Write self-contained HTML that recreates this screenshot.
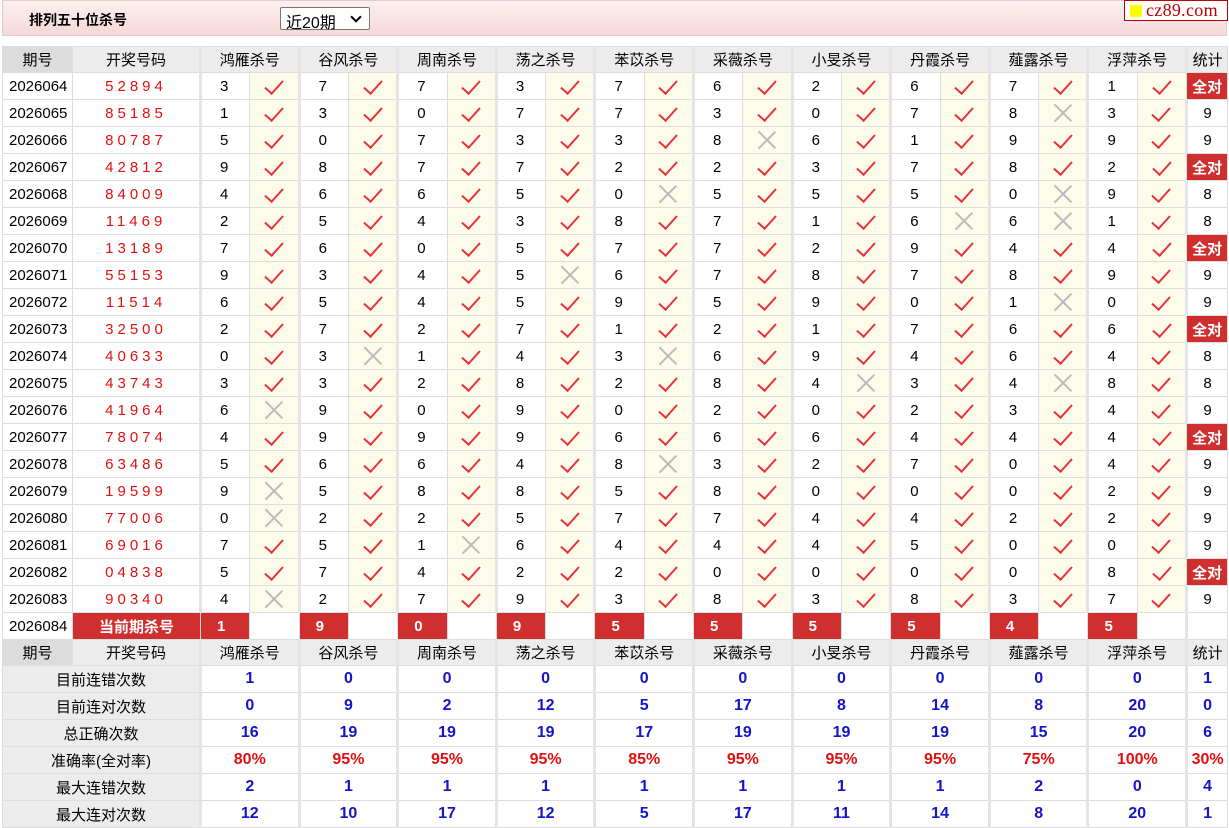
<!DOCTYPE html>
<html><head><meta charset="utf-8">
<style>
*{margin:0;padding:0;box-sizing:border-box}
body{width:1229px;height:827px;background:#fff;font-family:"Liberation Sans","Noto Sans CJK SC",sans-serif;font-size:15px;color:#000;position:relative;overflow:hidden}
.top{position:absolute;left:2px;top:0;width:1225px;height:36px;background:linear-gradient(#fdf0f0,#f6d8d8);border:1px solid #e6caca}
.top b{position:absolute;left:26px;top:9px;font-size:14px}
.sel{position:absolute;left:277px;top:6px;width:90px;height:23px;border:1px solid #777;background:#fff;font-size:16px;padding:1px 5px;border-radius:2px}
.sel::after{content:'';position:absolute;right:9px;top:5px;width:6px;height:6px;border:solid #000;border-width:0 2px 2px 0;transform:rotate(45deg)}
.logo{position:absolute;left:1124px;top:0;width:104px;height:21px;border:1px solid #b00;background:#fff;font-family:"Liberation Serif",serif;font-size:18px;color:#b00;line-height:18px;padding-left:21px;letter-spacing:0.3px}
.logo::before{content:'';position:absolute;left:5px;top:4px;width:12px;height:12px;background:#ff0}
table{position:absolute;left:2px;top:46px;border-collapse:collapse;table-layout:fixed;width:1225px}
td{border:1px solid #ddd;text-align:center;height:27px;padding:0;white-space:nowrap;overflow:hidden}
tr.h td{background:#ececec;height:26px}
tr.h td.q{background:#dcdcdc}
td.p{text-align:left;padding-left:6px}
td.k{color:#e01010;letter-spacing:4px;font-size:15px}
td.n{text-align:left;padding-left:18px;border-left:3px solid #e4e4e4}
td.g{border-left:3px solid #e4e4e4}
td.c{background:#fdfbea}
td.s{border-left:3px solid #e4e4e4}
.y{display:inline-block;width:10px;height:18px;border:solid #e8303a;border-width:0 2.5px 2.5px 0;transform:rotate(42deg);margin-top:-4px;vertical-align:middle}
.x{display:inline-block;width:18px;height:18px;position:relative;vertical-align:middle}
.x::before,.x::after{content:'';position:absolute;left:8px;top:-3px;width:1.5px;height:24px;background:#bbb;transform:rotate(45deg)}
.x::after{transform:rotate(-45deg)}
td.a{background:#cf2f2f;color:#fff;font-weight:bold}
td.r{background:#cf2f2f;color:#fff;font-weight:bold;text-align:left;padding-left:16px}
td.l{background:#ececec}
td.v{color:#1414c8;font-weight:bold;font-size:16px;border-left:3px solid #e4e4e4}
td.pc{color:#e01010}
</style></head><body>
<div class="top"><b>排列五十位杀号</b><div class="sel">近20期</div></div>
<div class="logo">cz89.com</div>
<table>
<colgroup><col style="width:70px"><col style="width:128px"><col span="20" style="width:49.3px"><col style="width:41px"></colgroup>
<tr class="h"><td class="q">期号</td><td>开奖号码</td><td colspan="2" class="g">鸿雁杀号</td><td colspan="2" class="g">谷风杀号</td><td colspan="2" class="g">周南杀号</td><td colspan="2" class="g">荡之杀号</td><td colspan="2" class="g">苯苡杀号</td><td colspan="2" class="g">采薇杀号</td><td colspan="2" class="g">小旻杀号</td><td colspan="2" class="g">丹霞杀号</td><td colspan="2" class="g">薤露杀号</td><td colspan="2" class="g">浮萍杀号</td><td class="s">统计</td></tr>
<tr><td class="p">2026064</td><td class="k">52894</td><td class="n">3</td><td class="c"><i class="y"></i></td><td class="n">7</td><td class="c"><i class="y"></i></td><td class="n">7</td><td class="c"><i class="y"></i></td><td class="n">3</td><td class="c"><i class="y"></i></td><td class="n">7</td><td class="c"><i class="y"></i></td><td class="n">6</td><td class="c"><i class="y"></i></td><td class="n">2</td><td class="c"><i class="y"></i></td><td class="n">6</td><td class="c"><i class="y"></i></td><td class="n">7</td><td class="c"><i class="y"></i></td><td class="n">1</td><td class="c"><i class="y"></i></td><td class="a">全对</td></tr>
<tr><td class="p">2026065</td><td class="k">85185</td><td class="n">1</td><td class="c"><i class="y"></i></td><td class="n">3</td><td class="c"><i class="y"></i></td><td class="n">0</td><td class="c"><i class="y"></i></td><td class="n">7</td><td class="c"><i class="y"></i></td><td class="n">7</td><td class="c"><i class="y"></i></td><td class="n">3</td><td class="c"><i class="y"></i></td><td class="n">0</td><td class="c"><i class="y"></i></td><td class="n">7</td><td class="c"><i class="y"></i></td><td class="n">8</td><td class="c"><i class="x"></i></td><td class="n">3</td><td class="c"><i class="y"></i></td><td class="s">9</td></tr>
<tr><td class="p">2026066</td><td class="k">80787</td><td class="n">5</td><td class="c"><i class="y"></i></td><td class="n">0</td><td class="c"><i class="y"></i></td><td class="n">7</td><td class="c"><i class="y"></i></td><td class="n">3</td><td class="c"><i class="y"></i></td><td class="n">3</td><td class="c"><i class="y"></i></td><td class="n">8</td><td class="c"><i class="x"></i></td><td class="n">6</td><td class="c"><i class="y"></i></td><td class="n">1</td><td class="c"><i class="y"></i></td><td class="n">9</td><td class="c"><i class="y"></i></td><td class="n">9</td><td class="c"><i class="y"></i></td><td class="s">9</td></tr>
<tr><td class="p">2026067</td><td class="k">42812</td><td class="n">9</td><td class="c"><i class="y"></i></td><td class="n">8</td><td class="c"><i class="y"></i></td><td class="n">7</td><td class="c"><i class="y"></i></td><td class="n">7</td><td class="c"><i class="y"></i></td><td class="n">2</td><td class="c"><i class="y"></i></td><td class="n">2</td><td class="c"><i class="y"></i></td><td class="n">3</td><td class="c"><i class="y"></i></td><td class="n">7</td><td class="c"><i class="y"></i></td><td class="n">8</td><td class="c"><i class="y"></i></td><td class="n">2</td><td class="c"><i class="y"></i></td><td class="a">全对</td></tr>
<tr><td class="p">2026068</td><td class="k">84009</td><td class="n">4</td><td class="c"><i class="y"></i></td><td class="n">6</td><td class="c"><i class="y"></i></td><td class="n">6</td><td class="c"><i class="y"></i></td><td class="n">5</td><td class="c"><i class="y"></i></td><td class="n">0</td><td class="c"><i class="x"></i></td><td class="n">5</td><td class="c"><i class="y"></i></td><td class="n">5</td><td class="c"><i class="y"></i></td><td class="n">5</td><td class="c"><i class="y"></i></td><td class="n">0</td><td class="c"><i class="x"></i></td><td class="n">9</td><td class="c"><i class="y"></i></td><td class="s">8</td></tr>
<tr><td class="p">2026069</td><td class="k">11469</td><td class="n">2</td><td class="c"><i class="y"></i></td><td class="n">5</td><td class="c"><i class="y"></i></td><td class="n">4</td><td class="c"><i class="y"></i></td><td class="n">3</td><td class="c"><i class="y"></i></td><td class="n">8</td><td class="c"><i class="y"></i></td><td class="n">7</td><td class="c"><i class="y"></i></td><td class="n">1</td><td class="c"><i class="y"></i></td><td class="n">6</td><td class="c"><i class="x"></i></td><td class="n">6</td><td class="c"><i class="x"></i></td><td class="n">1</td><td class="c"><i class="y"></i></td><td class="s">8</td></tr>
<tr><td class="p">2026070</td><td class="k">13189</td><td class="n">7</td><td class="c"><i class="y"></i></td><td class="n">6</td><td class="c"><i class="y"></i></td><td class="n">0</td><td class="c"><i class="y"></i></td><td class="n">5</td><td class="c"><i class="y"></i></td><td class="n">7</td><td class="c"><i class="y"></i></td><td class="n">7</td><td class="c"><i class="y"></i></td><td class="n">2</td><td class="c"><i class="y"></i></td><td class="n">9</td><td class="c"><i class="y"></i></td><td class="n">4</td><td class="c"><i class="y"></i></td><td class="n">4</td><td class="c"><i class="y"></i></td><td class="a">全对</td></tr>
<tr><td class="p">2026071</td><td class="k">55153</td><td class="n">9</td><td class="c"><i class="y"></i></td><td class="n">3</td><td class="c"><i class="y"></i></td><td class="n">4</td><td class="c"><i class="y"></i></td><td class="n">5</td><td class="c"><i class="x"></i></td><td class="n">6</td><td class="c"><i class="y"></i></td><td class="n">7</td><td class="c"><i class="y"></i></td><td class="n">8</td><td class="c"><i class="y"></i></td><td class="n">7</td><td class="c"><i class="y"></i></td><td class="n">8</td><td class="c"><i class="y"></i></td><td class="n">9</td><td class="c"><i class="y"></i></td><td class="s">9</td></tr>
<tr><td class="p">2026072</td><td class="k">11514</td><td class="n">6</td><td class="c"><i class="y"></i></td><td class="n">5</td><td class="c"><i class="y"></i></td><td class="n">4</td><td class="c"><i class="y"></i></td><td class="n">5</td><td class="c"><i class="y"></i></td><td class="n">9</td><td class="c"><i class="y"></i></td><td class="n">5</td><td class="c"><i class="y"></i></td><td class="n">9</td><td class="c"><i class="y"></i></td><td class="n">0</td><td class="c"><i class="y"></i></td><td class="n">1</td><td class="c"><i class="x"></i></td><td class="n">0</td><td class="c"><i class="y"></i></td><td class="s">9</td></tr>
<tr><td class="p">2026073</td><td class="k">32500</td><td class="n">2</td><td class="c"><i class="y"></i></td><td class="n">7</td><td class="c"><i class="y"></i></td><td class="n">2</td><td class="c"><i class="y"></i></td><td class="n">7</td><td class="c"><i class="y"></i></td><td class="n">1</td><td class="c"><i class="y"></i></td><td class="n">2</td><td class="c"><i class="y"></i></td><td class="n">1</td><td class="c"><i class="y"></i></td><td class="n">7</td><td class="c"><i class="y"></i></td><td class="n">6</td><td class="c"><i class="y"></i></td><td class="n">6</td><td class="c"><i class="y"></i></td><td class="a">全对</td></tr>
<tr><td class="p">2026074</td><td class="k">40633</td><td class="n">0</td><td class="c"><i class="y"></i></td><td class="n">3</td><td class="c"><i class="x"></i></td><td class="n">1</td><td class="c"><i class="y"></i></td><td class="n">4</td><td class="c"><i class="y"></i></td><td class="n">3</td><td class="c"><i class="x"></i></td><td class="n">6</td><td class="c"><i class="y"></i></td><td class="n">9</td><td class="c"><i class="y"></i></td><td class="n">4</td><td class="c"><i class="y"></i></td><td class="n">6</td><td class="c"><i class="y"></i></td><td class="n">4</td><td class="c"><i class="y"></i></td><td class="s">8</td></tr>
<tr><td class="p">2026075</td><td class="k">43743</td><td class="n">3</td><td class="c"><i class="y"></i></td><td class="n">3</td><td class="c"><i class="y"></i></td><td class="n">2</td><td class="c"><i class="y"></i></td><td class="n">8</td><td class="c"><i class="y"></i></td><td class="n">2</td><td class="c"><i class="y"></i></td><td class="n">8</td><td class="c"><i class="y"></i></td><td class="n">4</td><td class="c"><i class="x"></i></td><td class="n">3</td><td class="c"><i class="y"></i></td><td class="n">4</td><td class="c"><i class="x"></i></td><td class="n">8</td><td class="c"><i class="y"></i></td><td class="s">8</td></tr>
<tr><td class="p">2026076</td><td class="k">41964</td><td class="n">6</td><td class="c"><i class="x"></i></td><td class="n">9</td><td class="c"><i class="y"></i></td><td class="n">0</td><td class="c"><i class="y"></i></td><td class="n">9</td><td class="c"><i class="y"></i></td><td class="n">0</td><td class="c"><i class="y"></i></td><td class="n">2</td><td class="c"><i class="y"></i></td><td class="n">0</td><td class="c"><i class="y"></i></td><td class="n">2</td><td class="c"><i class="y"></i></td><td class="n">3</td><td class="c"><i class="y"></i></td><td class="n">4</td><td class="c"><i class="y"></i></td><td class="s">9</td></tr>
<tr><td class="p">2026077</td><td class="k">78074</td><td class="n">4</td><td class="c"><i class="y"></i></td><td class="n">9</td><td class="c"><i class="y"></i></td><td class="n">9</td><td class="c"><i class="y"></i></td><td class="n">9</td><td class="c"><i class="y"></i></td><td class="n">6</td><td class="c"><i class="y"></i></td><td class="n">6</td><td class="c"><i class="y"></i></td><td class="n">6</td><td class="c"><i class="y"></i></td><td class="n">4</td><td class="c"><i class="y"></i></td><td class="n">4</td><td class="c"><i class="y"></i></td><td class="n">4</td><td class="c"><i class="y"></i></td><td class="a">全对</td></tr>
<tr><td class="p">2026078</td><td class="k">63486</td><td class="n">5</td><td class="c"><i class="y"></i></td><td class="n">6</td><td class="c"><i class="y"></i></td><td class="n">6</td><td class="c"><i class="y"></i></td><td class="n">4</td><td class="c"><i class="y"></i></td><td class="n">8</td><td class="c"><i class="x"></i></td><td class="n">3</td><td class="c"><i class="y"></i></td><td class="n">2</td><td class="c"><i class="y"></i></td><td class="n">7</td><td class="c"><i class="y"></i></td><td class="n">0</td><td class="c"><i class="y"></i></td><td class="n">4</td><td class="c"><i class="y"></i></td><td class="s">9</td></tr>
<tr><td class="p">2026079</td><td class="k">19599</td><td class="n">9</td><td class="c"><i class="x"></i></td><td class="n">5</td><td class="c"><i class="y"></i></td><td class="n">8</td><td class="c"><i class="y"></i></td><td class="n">8</td><td class="c"><i class="y"></i></td><td class="n">5</td><td class="c"><i class="y"></i></td><td class="n">8</td><td class="c"><i class="y"></i></td><td class="n">0</td><td class="c"><i class="y"></i></td><td class="n">0</td><td class="c"><i class="y"></i></td><td class="n">0</td><td class="c"><i class="y"></i></td><td class="n">2</td><td class="c"><i class="y"></i></td><td class="s">9</td></tr>
<tr><td class="p">2026080</td><td class="k">77006</td><td class="n">0</td><td class="c"><i class="x"></i></td><td class="n">2</td><td class="c"><i class="y"></i></td><td class="n">2</td><td class="c"><i class="y"></i></td><td class="n">5</td><td class="c"><i class="y"></i></td><td class="n">7</td><td class="c"><i class="y"></i></td><td class="n">7</td><td class="c"><i class="y"></i></td><td class="n">4</td><td class="c"><i class="y"></i></td><td class="n">4</td><td class="c"><i class="y"></i></td><td class="n">2</td><td class="c"><i class="y"></i></td><td class="n">2</td><td class="c"><i class="y"></i></td><td class="s">9</td></tr>
<tr><td class="p">2026081</td><td class="k">69016</td><td class="n">7</td><td class="c"><i class="y"></i></td><td class="n">5</td><td class="c"><i class="y"></i></td><td class="n">1</td><td class="c"><i class="x"></i></td><td class="n">6</td><td class="c"><i class="y"></i></td><td class="n">4</td><td class="c"><i class="y"></i></td><td class="n">4</td><td class="c"><i class="y"></i></td><td class="n">4</td><td class="c"><i class="y"></i></td><td class="n">5</td><td class="c"><i class="y"></i></td><td class="n">0</td><td class="c"><i class="y"></i></td><td class="n">0</td><td class="c"><i class="y"></i></td><td class="s">9</td></tr>
<tr><td class="p">2026082</td><td class="k">04838</td><td class="n">5</td><td class="c"><i class="y"></i></td><td class="n">7</td><td class="c"><i class="y"></i></td><td class="n">4</td><td class="c"><i class="y"></i></td><td class="n">2</td><td class="c"><i class="y"></i></td><td class="n">2</td><td class="c"><i class="y"></i></td><td class="n">0</td><td class="c"><i class="y"></i></td><td class="n">0</td><td class="c"><i class="y"></i></td><td class="n">0</td><td class="c"><i class="y"></i></td><td class="n">0</td><td class="c"><i class="y"></i></td><td class="n">8</td><td class="c"><i class="y"></i></td><td class="a">全对</td></tr>
<tr><td class="p">2026083</td><td class="k">90340</td><td class="n">4</td><td class="c"><i class="x"></i></td><td class="n">2</td><td class="c"><i class="y"></i></td><td class="n">7</td><td class="c"><i class="y"></i></td><td class="n">9</td><td class="c"><i class="y"></i></td><td class="n">3</td><td class="c"><i class="y"></i></td><td class="n">8</td><td class="c"><i class="y"></i></td><td class="n">3</td><td class="c"><i class="y"></i></td><td class="n">8</td><td class="c"><i class="y"></i></td><td class="n">3</td><td class="c"><i class="y"></i></td><td class="n">7</td><td class="c"><i class="y"></i></td><td class="s">9</td></tr>
<tr><td class="p">2026084</td><td class="a">当前期杀号</td><td class="r">1</td><td></td><td class="r">9</td><td></td><td class="r">0</td><td></td><td class="r">9</td><td></td><td class="r">5</td><td></td><td class="r">5</td><td></td><td class="r">5</td><td></td><td class="r">5</td><td></td><td class="r">4</td><td></td><td class="r">5</td><td></td><td class="s"></td></tr>
<tr class="h"><td class="q">期号</td><td>开奖号码</td><td colspan="2" class="g">鸿雁杀号</td><td colspan="2" class="g">谷风杀号</td><td colspan="2" class="g">周南杀号</td><td colspan="2" class="g">荡之杀号</td><td colspan="2" class="g">苯苡杀号</td><td colspan="2" class="g">采薇杀号</td><td colspan="2" class="g">小旻杀号</td><td colspan="2" class="g">丹霞杀号</td><td colspan="2" class="g">薤露杀号</td><td colspan="2" class="g">浮萍杀号</td><td class="s">统计</td></tr>
<tr><td colspan="2" class="l">目前连错次数</td><td colspan="2" class="v">1</td><td colspan="2" class="v">0</td><td colspan="2" class="v">0</td><td colspan="2" class="v">0</td><td colspan="2" class="v">0</td><td colspan="2" class="v">0</td><td colspan="2" class="v">0</td><td colspan="2" class="v">0</td><td colspan="2" class="v">0</td><td colspan="2" class="v">0</td><td class="v">1</td></tr>
<tr><td colspan="2" class="l">目前连对次数</td><td colspan="2" class="v">0</td><td colspan="2" class="v">9</td><td colspan="2" class="v">2</td><td colspan="2" class="v">12</td><td colspan="2" class="v">5</td><td colspan="2" class="v">17</td><td colspan="2" class="v">8</td><td colspan="2" class="v">14</td><td colspan="2" class="v">8</td><td colspan="2" class="v">20</td><td class="v">0</td></tr>
<tr><td colspan="2" class="l">总正确次数</td><td colspan="2" class="v">16</td><td colspan="2" class="v">19</td><td colspan="2" class="v">19</td><td colspan="2" class="v">19</td><td colspan="2" class="v">17</td><td colspan="2" class="v">19</td><td colspan="2" class="v">19</td><td colspan="2" class="v">19</td><td colspan="2" class="v">15</td><td colspan="2" class="v">20</td><td class="v">6</td></tr>
<tr><td colspan="2" class="l">准确率(全对率)</td><td colspan="2" class="v pc">80%</td><td colspan="2" class="v pc">95%</td><td colspan="2" class="v pc">95%</td><td colspan="2" class="v pc">95%</td><td colspan="2" class="v pc">85%</td><td colspan="2" class="v pc">95%</td><td colspan="2" class="v pc">95%</td><td colspan="2" class="v pc">95%</td><td colspan="2" class="v pc">75%</td><td colspan="2" class="v pc">100%</td><td class="v pc">30%</td></tr>
<tr><td colspan="2" class="l">最大连错次数</td><td colspan="2" class="v">2</td><td colspan="2" class="v">1</td><td colspan="2" class="v">1</td><td colspan="2" class="v">1</td><td colspan="2" class="v">1</td><td colspan="2" class="v">1</td><td colspan="2" class="v">1</td><td colspan="2" class="v">1</td><td colspan="2" class="v">2</td><td colspan="2" class="v">0</td><td class="v">4</td></tr>
<tr><td colspan="2" class="l">最大连对次数</td><td colspan="2" class="v">12</td><td colspan="2" class="v">10</td><td colspan="2" class="v">17</td><td colspan="2" class="v">12</td><td colspan="2" class="v">5</td><td colspan="2" class="v">17</td><td colspan="2" class="v">11</td><td colspan="2" class="v">14</td><td colspan="2" class="v">8</td><td colspan="2" class="v">20</td><td class="v">1</td></tr>
</table>
</body></html>
